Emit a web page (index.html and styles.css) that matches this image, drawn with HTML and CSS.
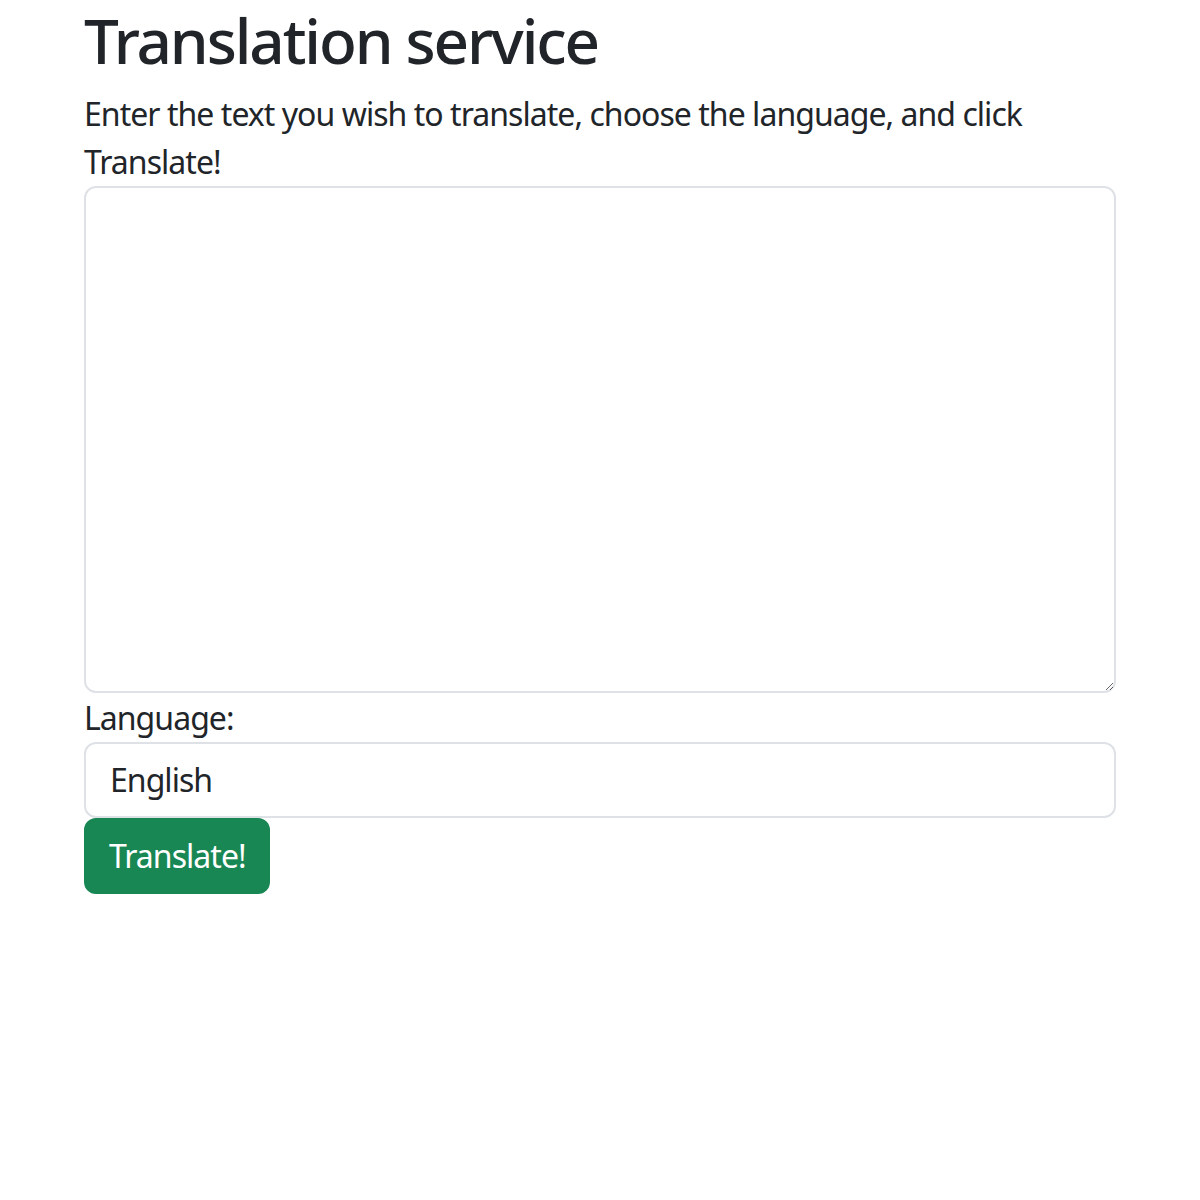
FILE: index.html
```html
<!DOCTYPE html>
<html lang="en">
<head>
<meta charset="utf-8">
<title>Translation service</title>
<link rel="stylesheet" href="styles.css">
</head>
<body>
<div class="container">
  <h1 class="title">Translation service</h1>
  <p class="intro">Enter the text you wish to translate, choose the language, and click Translate!</p>
  <form class="form">
    <textarea class="text-input"></textarea>
    <label class="label" for="lang">Language:</label>
    <select class="select" id="lang">
      <option>English</option>
    </select>
    <button type="button" class="btn">Translate!</button>
  </form>
</div>
</body>
</html>
```
FILE: styles.css
```css
html, body {
  margin: 0;
  padding: 0;
  background: #fff;
}
body {
  font-family: "Noto Sans", "Open Sans", sans-serif;
  font-size: 32px;
  line-height: 48px;
  letter-spacing: -0.03em;
  color: #212529;
}
.container {
  width: 1032px;
  margin: 0 auto;
}
.title {
  font-size: 62px;
  font-weight: 500;
  line-height: 76px;
  letter-spacing: -0.034em;
  margin: 0 0 14px;
  padding-top: 2px;
}
.intro {
  margin: -2px 0 0;
}
.form {
  display: flex;
  flex-direction: column;
  align-items: flex-start;
}
.text-input {
  box-sizing: border-box;
  width: 100%;
  height: 507px;
  border: 2px solid #dee2e6;
  border-radius: 12px;
  font: inherit;
  padding: 12px 24px;
  margin: 0;
}
.label {
  display: block;
  line-height: 49px;
}
.select {
  box-sizing: border-box;
  width: 100%;
  height: 76px;
  border: 2px solid #dee2e6;
  border-radius: 12px;
  font: inherit;
  letter-spacing: -0.03em;
  color: #212529;
  background: #fff;
  padding: 0 24px;
  margin: 0;
  appearance: none;
  -webkit-appearance: none;
}
.btn {
  height: 76px;
  border: 2px solid #198754;
  background: #198754;
  color: #fff;
  border-radius: 12px;
  font: inherit;
  letter-spacing: -0.03em;
  padding: 0 22px 0 23px;
  margin: 0;
}
```
